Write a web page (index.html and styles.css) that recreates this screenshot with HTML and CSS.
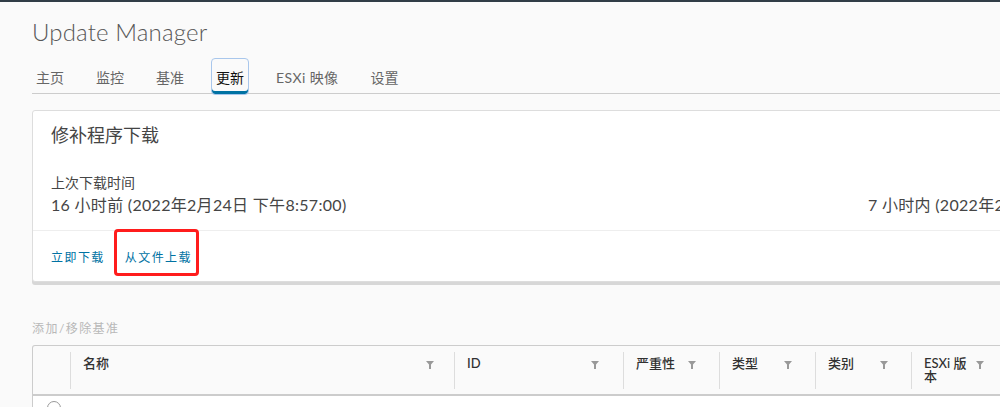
FILE: index.html
```html
<!DOCTYPE html>
<html>
<head>
<meta charset="utf-8" />
<title>Update Manager</title>
<link rel="stylesheet" href="styles.css">
</head>
<body>

<div class="topbar"></div>

<div class="page">
  <h1 class="title">Update Manager</h1>

  <nav class="tabs">
    <button class="tab">主页</button>
    <button class="tab">监控</button>
    <button class="tab">基准</button>
    <button class="tab active">更新</button>
    <button class="tab latin">ESXi 映像</button>
    <button class="tab">设置</button>
  </nav>

  <section class="card">
    <div class="card-header">修补程序下载</div>
    <div class="card-block">
      <div class="col">
        <div class="label">上次下载时间</div>
        <div class="value">16 小时前 (2022年2月24日 下午8:57:00)</div>
      </div>
      <div class="col">
        <div class="label">&nbsp;</div>
        <div class="value">7 小时内 (2022年2月25日 下午8:57:00)</div>
      </div>
    </div>
    <div class="card-footer">
      <a class="link">立即下载</a>
      <a class="link">从文件上载</a>
      <span class="mark"></span>
    </div>
  </section>

  <div class="actions">
    <span class="link disabled">添加/移除基准</span>
  </div>

  <div class="grid">
    <div class="grid-head">
      <div class="cell sel"></div>
      <div class="cell c-name"><span>名称</span><svg class="filter" viewBox="0 0 8 8"><path d="M0 0h8L5 3.6V8H3V3.6z"/></svg></div>
      <div class="cell c-id"><span>ID</span><svg class="filter" viewBox="0 0 8 8"><path d="M0 0h8L5 3.6V8H3V3.6z"/></svg></div>
      <div class="cell c-sm"><span>严重性</span><svg class="filter" viewBox="0 0 8 8"><path d="M0 0h8L5 3.6V8H3V3.6z"/></svg></div>
      <div class="cell c-sm"><span>类型</span><svg class="filter" viewBox="0 0 8 8"><path d="M0 0h8L5 3.6V8H3V3.6z"/></svg></div>
      <div class="cell c-sm"><span>类别</span><svg class="filter" viewBox="0 0 8 8"><path d="M0 0h8L5 3.6V8H3V3.6z"/></svg></div>
      <div class="cell c-sm"><span class="wrap">ESXi 版本</span><svg class="filter" viewBox="0 0 8 8"><path d="M0 0h8L5 3.6V8H3V3.6z"/></svg></div>
      <div class="cell c-rest"></div>
    </div>
    <div class="grid-row">
      <div class="cell sel"><span class="radio"></span></div>
    </div>
  </div>
</div>

</body>
</html>
```

FILE: styles.css
```css
html, body {
  margin: 0;
  padding: 0;
}
body {
  background: #fafafa;
  color: #565656;
  font-family: Lato, "Noto Sans CJK SC", sans-serif;
  overflow: hidden;
  height: 407px;
}
.topbar {
  height: 2px;
  background: #313d47;
}
.page {
  width: 1120px;
  padding-left: 32px;
}
.title {
  margin: 0;
  padding-top: 16px;
  height: 41px;
  font-size: 24px;
  line-height: 28px;
  font-weight: 300;
  color: #575757;
  letter-spacing: 0.15px;
}

/* tabs */
.tabs {
  display: flex;
  gap: 24px;
  height: 34px;
  border-bottom: 1px solid #ccc;
}
.tab {
  height: 35px;
  margin-bottom: -1px;
  padding: 0 4px;
  border: 0;
  background: none;
  font-family: Lato, "Noto Sans CJK SC", sans-serif;
  font-size: 14px;
  color: #666;
}
.tab.latin {
  letter-spacing: 0.4px;
}
.tab.active {
  color: #111;
  border-radius: 3px;
  outline: 1px solid #a9c7ec;
  box-shadow: inset 0 -3px 0 #0072a3;
}

/* card */
.card {
  margin-top: 16px;
  background: #fff;
  border: 1px solid #ddd;
  border-radius: 3px;
  box-shadow: 0 3px 0 #d7d7d7;
}
.card-header {
  padding: 12px 18px 0;
  font-size: 18px;
  line-height: 24px;
  color: #444;
}
.card-block {
  display: grid;
  grid-template-columns: 817px auto;
  padding: 26px 18px 13px;
  border-bottom: 1px solid #eee;
  white-space: nowrap;
}
.label {
  font-size: 14px;
  line-height: 20px;
  color: #454545;
}
.value {
  font-size: 16px;
  line-height: 24px;
  letter-spacing: 0.3px;
  color: #454545;
}
.card-footer {
  position: relative;
  display: flex;
  align-items: center;
  gap: 20px;
  height: 50px;
  padding: 0 18px;
}
.link {
  font-size: 12px;
  letter-spacing: 0.12em;
  color: #0072a3;
  cursor: pointer;
}
.mark {
  position: absolute;
  left: 81px;
  top: -2px;
  width: 79px;
  height: 41px;
  border: 3px solid #ff1c1c;
  border-radius: 4px;
}

/* baselines */
.actions {
  margin-top: 33px;
  height: 24px;
  line-height: 24px;
}
.link.disabled {
  color: #b8b8b8;
  cursor: default;
}
.grid {
  margin-top: 6px;
  border: 1px solid #ccc;
  border-bottom: 0;
  border-radius: 3px 0 0 0;
}
.grid-head {
  display: flex;
  padding: 6px 0 5px;
  border-bottom: 2px solid #ccc;
}
.cell {
  display: flex;
  justify-content: space-between;
  align-items: flex-start;
  box-sizing: border-box;
  height: 37px;
  padding: 5px 20px 0 12px;
  border-left: 1px solid #ddd;
  font-size: 13px;
  line-height: 13px;
  font-weight: 500;
  color: #313131;
}
.cell.sel {
  width: 37px;
  border-left: 0;
  padding: 0;
}
.c-name { width: 384px; }
.c-id { width: 169px; padding-right: 24px; }
.c-sm { width: 96px; padding-right: 23px; }
.c-rest { flex: 1; }
.wrap {
  width: 48px;
}
.filter {
  width: 8px;
  height: 8px;
  margin-top: 4px;
  fill: #999;
}
.grid-row {
  display: flex;
  background: #fff;
  height: 20px;
}
.grid-row .cell {
  height: 20px;
}
.radio {
  display: block;
  width: 12px;
  height: 12px;
  margin: 5px 0 0 14px;
  border: 1px solid #999;
  border-radius: 50%;
}
```
